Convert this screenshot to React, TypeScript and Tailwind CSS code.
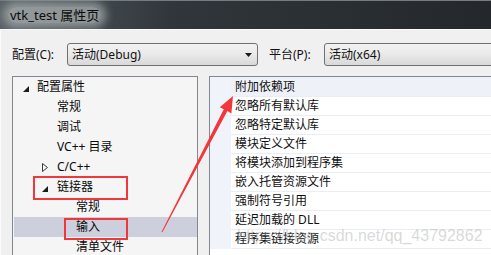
import type { ReactNode } from 'react';

const FONT = 'font-["Noto_Sans","Noto_Sans_CJK_SC",sans-serif]';

type TreeRow = { label: string; level: 0 | 1 | 2; icon?: 'open' | 'closed'; selected?: boolean };

const TREE: TreeRow[] = [
  { label: '配置属性', level: 0, icon: 'open' },
  { label: '常规', level: 1 },
  { label: '调试', level: 1 },
  { label: 'VC++ 目录', level: 1 },
  { label: 'C/C++', level: 1, icon: 'closed' },
  { label: '链接器', level: 1, icon: 'open' },
  { label: '常规', level: 2 },
  { label: '输入', level: 2, selected: true },
  { label: '清单文件', level: 2 },
];

const PROPS = [
  '附加依赖项',
  '忽略所有默认库',
  '忽略特定默认库',
  '模块定义文件',
  '将模块添加到程序集',
  '嵌入托管资源文件',
  '强制符号引用',
  '延迟加载的 DLL',
  '程序集链接资源',
];

const INDENT = ['pl-[10px]', 'pl-[29px]', 'pl-[48px]'];

function Expander({ kind }: { kind?: 'open' | 'closed' }) {
  if (kind === 'open') {
    return (
      <svg width="6" height="6" viewBox="0 0 6 6" className="mt-[3px]">
        <polygon points="6,0 6,6 0,6" fill="#1b1b1b" />
      </svg>
    );
  }
  if (kind === 'closed') {
    return (
      <svg width="6" height="9" viewBox="0 0 6 9">
        <polygon points="0.5,0.5 5.5,4.5 0.5,8.5" fill="none" stroke="#3c3c3c" strokeWidth="1" />
      </svg>
    );
  }
  return null;
}

function Combo({ text, width, arrow }: { text: string; width: string; arrow?: boolean }) {
  return (
    <div className={`${width} h-[23px] shrink-0 flex items-center rounded-[3px] border border-[#707070] bg-gradient-to-b from-[#f3f3f3] via-[#e9e9e9] to-[#d9d9d9] pl-[4px] pr-[5px]`}>
      <span className="flex-1 text-[12px] leading-[16px] text-[#111]">{text}</span>
      {arrow && (
        <svg width="7" height="4" viewBox="0 0 7 4">
          <polygon points="0,0 7,0 3.5,4" fill="#1a1a1a" />
        </svg>
      )}
    </div>
  );
}

function Label({ children }: { children: ReactNode }) {
  return <span className="w-[55px] shrink-0 text-[12px] leading-[16px] text-[#111]">{children}</span>;
}

export default function App() {
  return (
    <div className={`relative w-[491px] h-[255px] overflow-hidden bg-[#1f2428] ${FONT}`}>
      {/* title bar */}
      <div className="h-[29px] border-t border-[#767b7f] bg-gradient-to-r from-[#596166] via-[#30363b] via-35% to-[#24282c] flex items-center pl-[8px]">
        <span className="rounded-full bg-[#aeb3b4]/70 shadow-[0_0_8px_5px_rgba(170,176,177,0.7)] px-[2px] text-[13px] leading-[16px] text-[#0c0c0c]">
          vtk_test 属性页
        </span>
      </div>

      <div className="flex h-[226px]">
        {/* window frame */}
        <div className="w-[2px] bg-[#1d2125]" />
        <div className="w-[3px] bg-gradient-to-b from-[#2c3a3c] to-[#35504f]" />
        <div className="w-[2px] bg-[#8f9597]" />

        {/* client area */}
        <div className="flex-1 border-t border-l border-[#fbfbfb] bg-[#f0f0f0] pl-[11px] pt-[13px]">
          <div className="flex items-center h-[23px]">
            <Label>配置(C):</Label>
            <Combo text="活动(Debug)" width="w-[191px]" arrow />
            <div className="w-[11px] shrink-0" />
            <Label>平台(P):</Label>
            <Combo text="活动(x64)" width="w-[200px]" />
          </div>

          <div className="flex mt-[10px] h-[200px]">
            {/* tree */}
            <div className="w-[186px] shrink-0 border-t border-l border-r border-[#828790] bg-[#f5f5f5]">
              {TREE.map((r, i) => (
                <div
                  key={i}
                  className={`h-[20px] flex items-center ${INDENT[r.level]} ${r.selected ? 'bg-[#cdd0dc] ml-px' : ''}`}
                >
                  <div className={`${r.level === 0 ? 'w-[14px]' : 'w-[15px]'} ${r.selected ? '-ml-px' : ''} shrink-0 flex items-center`}>
                    <Expander kind={r.icon} />
                  </div>
                  <span className="text-[12px] leading-[16px] text-[#0a0a0a] whitespace-nowrap">{r.label}</span>
                </div>
              ))}
            </div>

            {/* property grid */}
            <div className="ml-[11px] w-[300px] shrink-0 border-t border-l border-[#828790] bg-white">
              {PROPS.map((p, i) => (
                <div key={i} className={`flex ${i === 0 ? 'h-[20px]' : 'h-[19px]'}`}>
                  <div className="w-[21px] shrink-0 bg-[#f0f4fa]" />
                  <div
                    className={`flex-1 flex items-center pl-[4px] border-b border-[#e9eef5] ${i === 0 ? 'bg-[#eef2f8]' : ''}`}
                  >
                    <span className="text-[12px] leading-[16px] text-[#101010] whitespace-nowrap">{p}</span>
                  </div>
                </div>
              ))}
            </div>
          </div>
        </div>
      </div>

      {/* annotation: red boxes */}
      <div className="absolute left-[33px] top-[176px] w-[95px] h-[24px] border-[2px] border-[#f0383b]" />
      <div className="absolute left-[64px] top-[218px] w-[64px] h-[22px] border-[2px] border-[#f0383b]" />

      {/* annotation: arrow */}
      <svg className="absolute left-0 top-0 pointer-events-none" width="491" height="255" viewBox="0 0 491 255">
        <polygon
          points="161.6,231.8 223.8,109.3 219.8,107.2 233,96 231.4,113.4 227.4,111.1 162.4,232.2"
          fill="#f2373a"
        />
      </svg>

      {/* watermark */}
      <span className='absolute left-[237px] top-[228px] text-[16px] leading-[16px] font-["Liberation_Sans",sans-serif] text-[rgba(170,170,170,0.45)] whitespace-nowrap pointer-events-none'>
        https://blog.csdn.net/qq_43792862
      </span>
    </div>
  );
}
